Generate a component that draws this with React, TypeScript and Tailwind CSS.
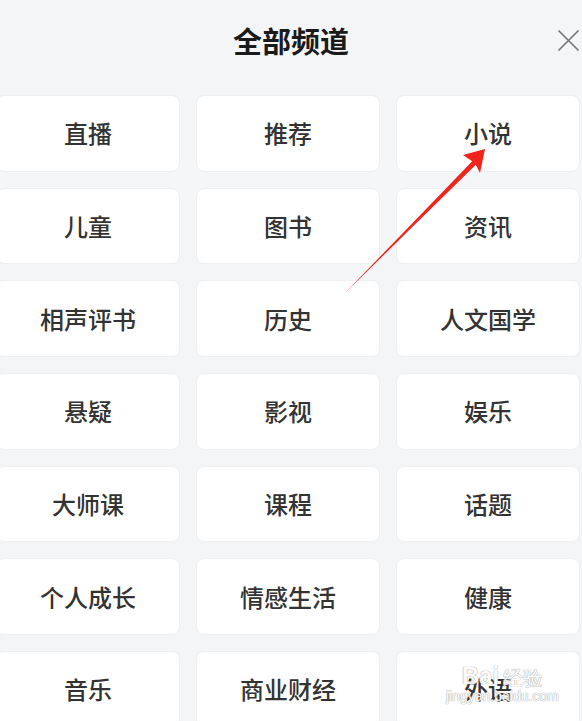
const channels = [
  '直播', '推荐', '小说',
  '儿童', '图书', '资讯',
  '相声评书', '历史', '人文国学',
  '悬疑', '影视', '娱乐',
  '大师课', '课程', '话题',
  '个人成长', '情感生活', '健康',
  '音乐', '商业财经', '外语',
];

export default function App() {
  return (
    <div
      className="relative h-[721px] w-[582px] overflow-hidden bg-[#f4f5f7]"
      style={{ fontFamily: '"Noto Sans CJK SC", "Noto Sans", sans-serif' }}
    >
      <div className="relative flex h-[80px] items-center justify-center">
        <h1 className="text-[29px] font-bold leading-none text-[#1a1a1a]">全部频道</h1>
        <button className="absolute left-[557px] top-[29px] text-[#777]">
          <svg width="23" height="23" viewBox="0 0 23 23" fill="none" stroke="currentColor" strokeWidth="1.7">
            <path d="M1.5 1.5 L21.5 21.5 M21.5 1.5 L1.5 21.5" />
          </svg>
        </button>
      </div>

      <div className="-ml-1 mt-[15px] grid w-[584px] grid-cols-[184px_184px_184px] gap-x-4 gap-y-[16px]">
        {channels.map((name) => (
          <div
            key={name}
            className="flex h-[76.7px] items-center justify-center rounded-lg border border-[#eeeff1] bg-white text-[24px] font-medium text-[#333]"
          >
            {name}
          </div>
        ))}
      </div>

      {/* annotation arrow */}
      <svg className="pointer-events-none absolute left-0 top-0" width="582" height="721">
        <polygon
          points="485,149 463,155 472.2,161.3 344,294 475.8,164.7 480,173"
          fill="#f0241c"
        />
      </svg>

      {/* watermark */}
      <div
        className="pointer-events-none absolute left-[446px] top-[664px] flex flex-col items-center text-white opacity-90"
        style={{ fontFamily: '"Liberation Sans", sans-serif', textShadow: '0 0 1px #999, 0 0 1px #999' }}
      >
        <div className="flex items-end gap-1 text-[24px] leading-none">
          <span className="font-bold">Bai</span>
          <span className="text-[20px]">经验</span>
        </div>
        <span className="text-[14px] leading-tight">jingyan.baidu.com</span>
      </div>
    </div>
  );
}
